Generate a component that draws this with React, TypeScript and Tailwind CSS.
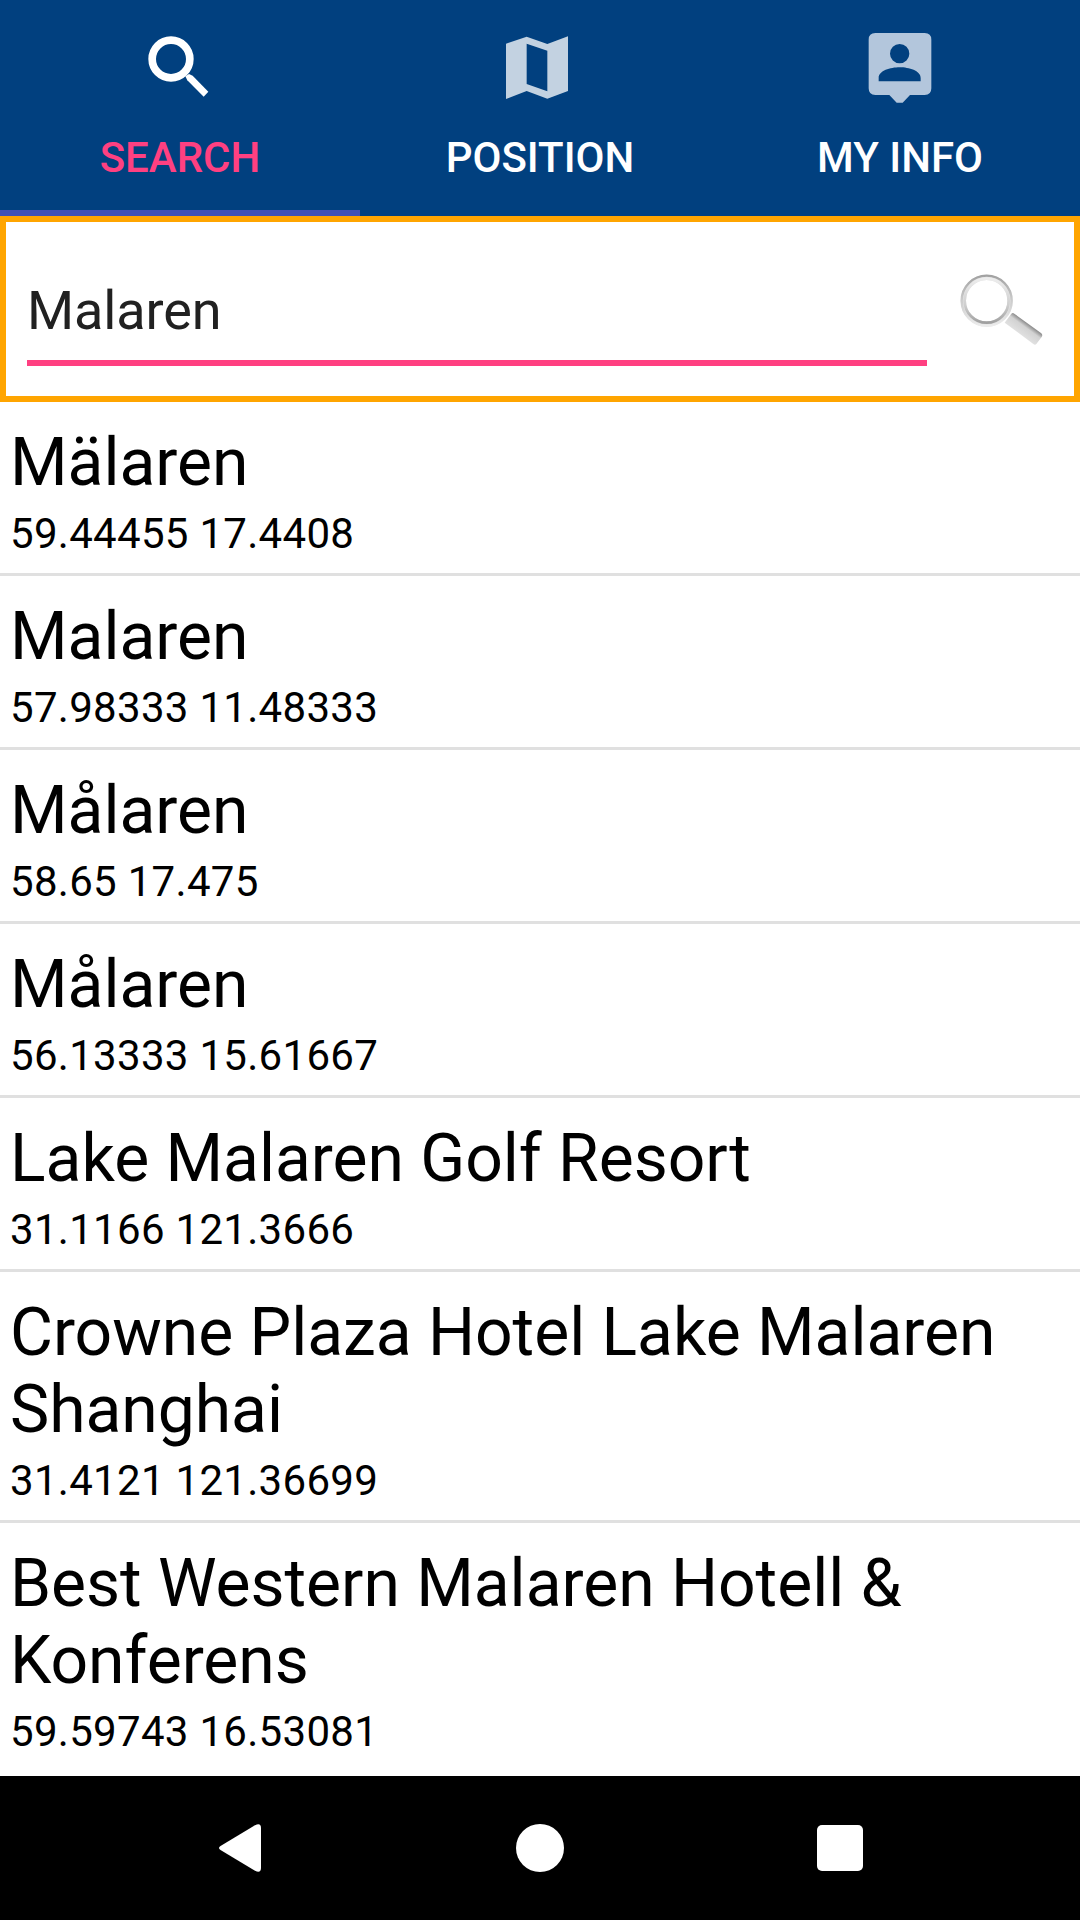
import type { ReactNode } from "react";

type Place = { name: string; coords: string };

const places: Place[] = [
  { name: "Mälaren", coords: "59.44455 17.4408" },
  { name: "Malaren", coords: "57.98333 11.48333" },
  { name: "Målaren", coords: "58.65 17.475" },
  { name: "Målaren", coords: "56.13333 15.61667" },
  { name: "Lake Malaren Golf Resort", coords: "31.1166 121.3666" },
  { name: "Crowne Plaza Hotel Lake Malaren Shanghai", coords: "31.4121 121.36699" },
  { name: "Best Western Malaren Hotell & Konferens", coords: "59.59743 16.53081" },
];

function SearchIcon() {
  return (
    <svg className="size-24" viewBox="396 36 288 288">
      <circle cx="513" cy="177" r="56.5" fill="none" stroke="#fff" strokeWidth="23" />
      <path d="M556 229L567 222L578 227L625 275L611 290L562 241Z" fill="#fff" />
    </svg>
  );
}

function MapIcon() {
  return (
    <svg className="size-24" viewBox="396 36 288 288" fill="#c3d2e1" fillRule="evenodd">
      <path d="M438 131L500 110L562 132L624 109V273L562 296L500 273L438 297ZM500 131V252L562 274V152Z" />
    </svg>
  );
}

function PersonIcon() {
  return (
    <svg className="size-24" viewBox="396 36 288 288" fill="#b3c6dc" fillRule="evenodd">
      <path d="M466 99H614Q634 99 634 119V265Q634 285 614 285H570L548 308H530L508 285H466Q446 285 446 265V119Q446 99 466 99ZM539 132A29 29 0 1 0 539 190A29 29 0 1 0 539 132ZM476 244H602V234C602 212 567 202 539 202S476 212 476 234Z" />
    </svg>
  );
}

function MagnifierIcon() {
  return (
    <svg className="size-24" viewBox="204 144 288 288" fill="none">
      <defs>
        <linearGradient id="rimOuter" x1="0" y1="0" x2="0" y2="1">
          <stop offset="0" stopColor="#a2a2a2" />
          <stop offset="0.5" stopColor="#cccccc" />
          <stop offset="1" stopColor="#ececec" />
        </linearGradient>
        <linearGradient id="rimInner" x1="0" y1="0" x2="0" y2="1">
          <stop offset="0" stopColor="#ededed" />
          <stop offset="0.6" stopColor="#cfcfcf" />
          <stop offset="1" stopColor="#a0a0a0" />
        </linearGradient>
        <linearGradient id="grip" gradientUnits="userSpaceOnUse" x1="443" y1="342" x2="421" y2="372">
          <stop offset="0" stopColor="#929292" />
          <stop offset="0.32" stopColor="#d2d2d2" />
          <stop offset="1" stopColor="#e0e0e0" />
        </linearGradient>
      </defs>
      <circle cx="320" cy="272" r="70" stroke="#e2e2e2" strokeWidth="16" />
      <circle cx="320" cy="272" r="75" stroke="url(#rimOuter)" strokeWidth="7" />
      <circle cx="320" cy="272" r="66" stroke="url(#rimInner)" strokeWidth="8" />
      <path d="M374 338L394 311Q398 307 403 311L484 370Q489 375 485 381L469 402Q465 406 460 402Z" fill="url(#grip)" />
    </svg>
  );
}

function Tab({ icon, label, active = false }: { icon: ReactNode; label: string; active?: boolean }) {
  return (
    <button
      className={
        active
          ? "flex h-full flex-1 flex-col items-center border-b-[6px] border-[#3f51b5] pt-3 text-[#ff4081]"
          : "flex h-full flex-1 flex-col items-center pt-3 text-white"
      }
    >
      {icon}
      <span className="mt-[25px] text-[42px] leading-[49px] font-medium">{label}</span>
    </button>
  );
}

export default function App() {
  return (
    <div className="flex h-[1920px] w-[1080px] flex-col overflow-hidden bg-white font-[Roboto,sans-serif] text-black">
      <nav className="flex h-[216px] shrink-0 bg-[#01407f]">
        <Tab icon={<SearchIcon />} label="SEARCH" active />
        <Tab icon={<MapIcon />} label="POSITION" />
        <Tab icon={<PersonIcon />} label="MY INFO" />
      </nav>

      <div className="flex h-[186px] shrink-0 items-start border-[6px] border-[#ffa500] pl-[21px]">
        <div className="mt-[48px] h-24 w-[900px] border-b-[6px] border-[#ff4081] text-[54px] leading-[64px] text-[#212121]">
          <div className="mt-[9px] tracking-[-0.1px]">Malaren</div>
        </div>
        <button className="mt-9 ml-[21px]">
          <MagnifierIcon />
        </button>
      </div>

      <ul className="min-h-0 flex-1 divide-y-[3px] divide-[#e0e0e0] overflow-hidden">
        {places.map((place, i) => (
          <li key={i} className="px-[10px] pt-[22px] pb-[15px]">
            <div className="text-[66px] leading-[77px] tracking-[-0.03px]">{place.name}</div>
            <div className="mt-2 text-[42px] leading-[49px] tracking-[0.3px]">{place.coords}</div>
          </li>
        ))}
      </ul>

      <footer className="flex h-36 shrink-0 items-center bg-black pl-[219px]">
        <svg className="h-12 w-[42px]" viewBox="0 0 42 48" fill="#fff">
          <path d="M1.5 22L36 1.2Q42 -1.5 42 4V44Q42 49.5 36 46.8L1.5 26Q-1.5 24 1.5 22Z" />
        </svg>
        <div className="ml-[255px] size-12 rounded-full bg-white" />
        <div className="ml-[253px] size-[46px] rounded-[5px] bg-white" />
      </footer>
    </div>
  );
}
